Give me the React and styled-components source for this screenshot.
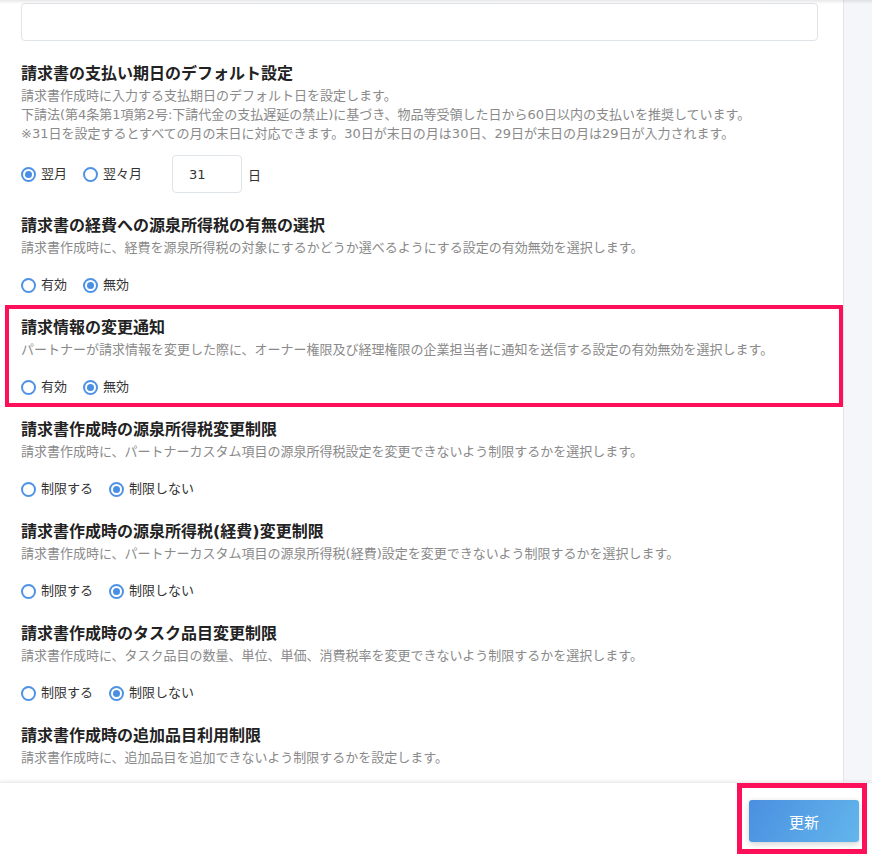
import React from 'react'
import styled, { createGlobalStyle } from 'styled-components'

const GlobalStyle = createGlobalStyle`
	* { box-sizing: border-box; }
	body {
		margin: 0;
		overflow: hidden;
		font-family: "DejaVu Sans", "Noto Sans CJK JP", sans-serif;
		color: #333;
		background: #fff;
	}
`

const sections = [
	{
		title: '請求書の経費への源泉所得税の有無の選択',
		desc: ['請求書作成時に、経費を源泉所得税の対象にするかどうか選べるようにする設定の有効無効を選択します。'],
		options: ['有効', '無効'],
		checked: 1,
	},
	{
		title: '請求情報の変更通知',
		desc: ['パートナーが請求情報を変更した際に、オーナー権限及び経理権限の企業担当者に通知を送信する設定の有効無効を選択します。'],
		options: ['有効', '無効'],
		checked: 1,
		highlighted: true,
	},
	{
		title: '請求書作成時の源泉所得税変更制限',
		desc: ['請求書作成時に、パートナーカスタム項目の源泉所得税設定を変更できないよう制限するかを選択します。'],
		options: ['制限する', '制限しない'],
		checked: 1,
	},
	{
		title: '請求書作成時の源泉所得税(経費)変更制限',
		desc: ['請求書作成時に、パートナーカスタム項目の源泉所得税(経費)設定を変更できないよう制限するかを選択します。'],
		options: ['制限する', '制限しない'],
		checked: 1,
	},
	{
		title: '請求書作成時のタスク品目変更制限',
		desc: ['請求書作成時に、タスク品目の数量、単位、単価、消費税率を変更できないよう制限するかを選択します。'],
		options: ['制限する', '制限しない'],
		checked: 1,
	},
	{
		title: '請求書作成時の追加品目利用制限',
		desc: ['請求書作成時に、追加品目を追加できないよう制限するかを設定します。'],
	},
]

const Radio = ({ label, checked }) => (
	<RadioItem>
		<Circle $checked={checked} />
		<RadioLabel>{label}</RadioLabel>
	</RadioItem>
)

const App = () => {
	return (
		<Page>
			<GlobalStyle />
			<Main>
				<Panel>
					<Memo />
					<Section>
						<Title>請求書の支払い期日のデフォルト設定</Title>
						<Desc>請求書作成時に入力する支払期日のデフォルト日を設定します。</Desc>
						<Desc>下請法(第4条第1項第2号:下請代金の支払遅延の禁止)に基づき、物品等受領した日から60日以内の支払いを推奨しています。</Desc>
						<Desc>※31日を設定するとすべての月の末日に対応できます。30日が末日の月は30日、29日が末日の月は29日が入力されます。</Desc>
						<Options $withInput>
							<Radio label="翌月" checked />
							<Radio label="翌々月" />
							<DayInput defaultValue="31" />
							<Unit>日</Unit>
						</Options>
					</Section>
					{sections.map((s) => (
						<Section key={s.title} $highlighted={s.highlighted}>
							<Title>{s.title}</Title>
							{s.desc.map((d) => (
								<Desc key={d}>{d}</Desc>
							))}
							{s.options && (
								<Options>
									{s.options.map((o, i) => (
										<Radio key={o} label={o} checked={i === s.checked} />
									))}
								</Options>
							)}
						</Section>
					))}
				</Panel>
				<SideStrip />
			</Main>
			<Footer>
				<Marked>
					<SubmitButton>更新</SubmitButton>
				</Marked>
			</Footer>
		</Page>
	)
}

export default App

const Page = styled.div`
	height: 100vh;
	display: flex;
	flex-direction: column;
	position: relative;
	&::before {
		content: '';
		position: absolute;
		top: 0;
		left: 0;
		right: 0;
		height: 4px;
		background: linear-gradient(rgba(0, 0, 0, 0.09), rgba(0, 0, 0, 0));
		z-index: 2;
	}
`

const Main = styled.div`
	flex: 1;
	display: flex;
	min-height: 0;
`

const Panel = styled.div`
	width: 843px;
	padding: 3px 25px 0 21px;
	background: #fff;
	overflow: hidden;
`

const SideStrip = styled.div`
	flex: 1;
	background: #f5f6fa;
	border-left: 1px solid #e4e5ea;
`

const Memo = styled.div`
	height: 38px;
	border: 1px solid #dfe4e8;
	border-radius: 4px;
	margin-bottom: 10px;
`

const Section = styled.div`
	padding: ${(p) => (p.$highlighted ? '6px 21px 6px 12px' : '10px 0')};
	margin: ${(p) => (p.$highlighted ? '0 -25px 0 -16px' : '0')};
	border: ${(p) => (p.$highlighted ? '4px solid #fe0f5a' : 'none')};
`

const Title = styled.div`
	font-size: 16px;
	font-weight: 700;
	line-height: 25px;
	color: #222;
`

const Desc = styled.div`
	font-size: 13px;
	line-height: 19px;
	color: #8a8a8a;
	white-space: nowrap;
`

const Options = styled.div`
	display: flex;
	align-items: center;
	height: ${(p) => (p.$withInput ? '38px' : '20px')};
	margin-top: ${(p) => (p.$withInput ? '12px' : '18px')};
`

const RadioItem = styled.label`
	display: flex;
	align-items: center;
	margin-right: 16px;
	cursor: pointer;
`

const Circle = styled.span`
	width: 15px;
	height: 15px;
	border-radius: 50%;
	border: 2px solid #4f92e5;
	background: #fff;
	display: flex;
	align-items: center;
	justify-content: center;
	&::after {
		content: '';
		width: 7px;
		height: 7px;
		border-radius: 50%;
		background: ${(p) => (p.$checked ? '#4a8fe3' : 'transparent')};
	}
`

const RadioLabel = styled.span`
	margin-left: 5px;
	font-size: 13px;
	line-height: 20px;
	color: #333;
`

const DayInput = styled.input`
	width: 70px;
	height: 38px;
	margin-left: 14px;
	padding: 0 16px;
	border: 1px solid #dfe4e8;
	border-radius: 4px;
	font-family: "DejaVu Sans", "Noto Sans", sans-serif;
	font-size: 13px;
	color: #333;
	outline: none;
`

const Unit = styled.span`
	margin-left: 6px;
	font-size: 13px;
	color: #333;
`

const Footer = styled.div`
	height: 75px;
	display: flex;
	justify-content: flex-end;
	align-items: flex-start;
	padding: 0 5px 0 0;
	background: #fff;
	box-shadow: 0 -1px 3px rgba(0, 0, 0, 0.08);
	border-top: 1px solid #ececec;
	position: relative;
	z-index: 1;
`

const Marked = styled.div`
	border: 5px solid #fe0f5a;
	padding: 12px 3px 7px 7px;
`

const SubmitButton = styled.button`
	width: 110px;
	height: 42px;
	border: none;
	border-radius: 3px;
	background: linear-gradient(120deg, #4a8fe0, #63b6ec);
	box-shadow: 0 2px 6px rgba(0, 0, 0, 0.18);
	color: #fff;
	font-family: "Noto Sans CJK JP", "Noto Sans", sans-serif;
	font-size: 15px;
	cursor: pointer;
`
